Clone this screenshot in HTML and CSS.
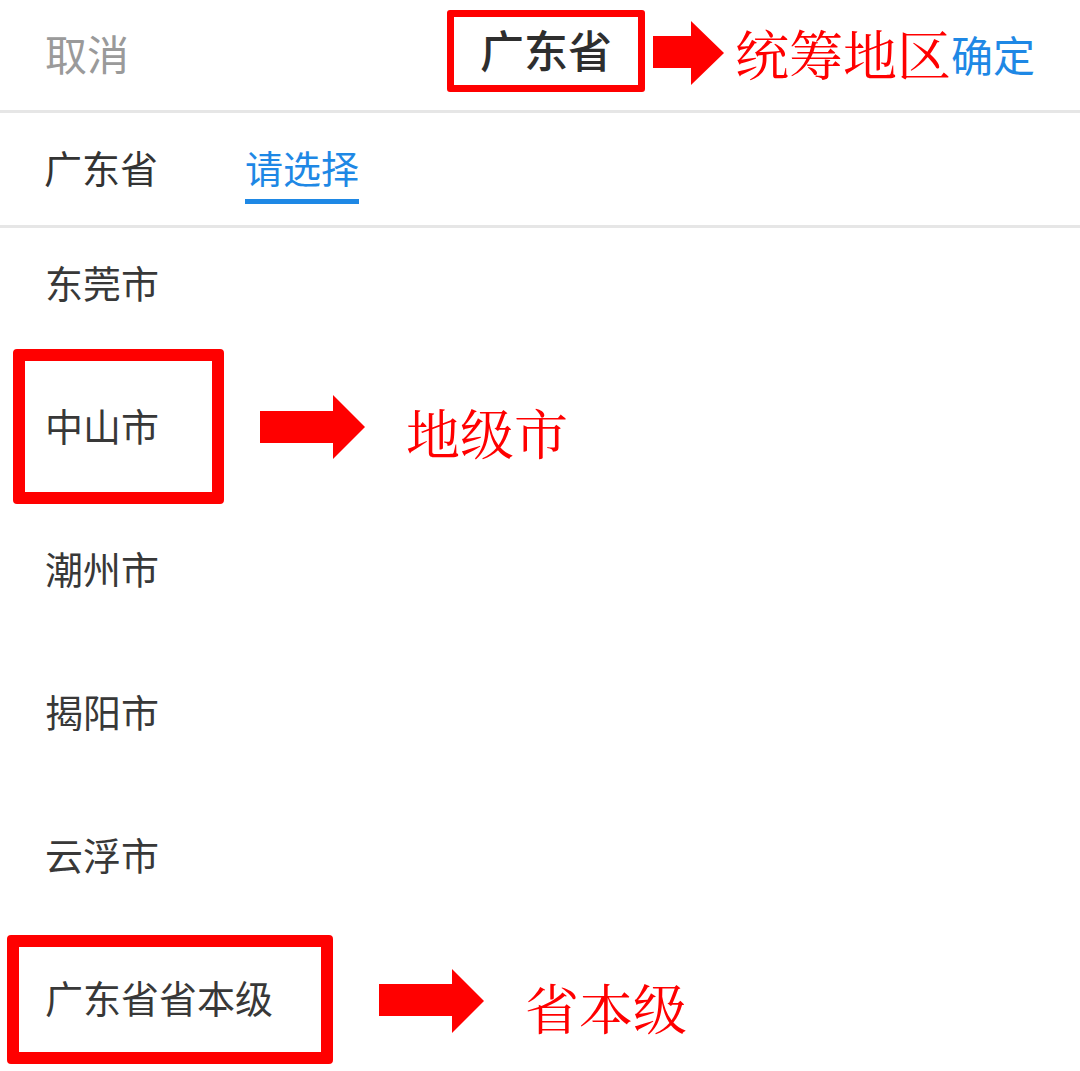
FILE: index.html
```html
<!DOCTYPE html>
<html lang="zh-CN">
<head>
    <meta charset="UTF-8">
    <meta name="viewport" content="width=device-width, initial-scale=1.0">
    <title>选择统筹地区</title>
    <link rel="stylesheet" href="styles.css">
</head>
<body>
    <div class="page">
        <!-- Header: cancel / title / confirm -->
        <div class="header">
            <div class="cancel">取消</div>
            <div class="title">广东省</div>
            <div class="header-right">
                <svg class="arrow arrow-top" width="71" height="64" viewBox="0 0 71 64">
                    <polygon points="0,15 38,15 38,0 71,32 38,64 38,47 0,47" fill="#ff0000"/>
                </svg>
                <span class="note note-top">统筹地区</span>
                <span class="confirm">确定</span>
            </div>
        </div>

        <div class="tabs">
            <div class="tab">广东省</div>
            <div class="tab active">请选择</div>
        </div>

        <ul class="list">
            <li class="item"><span class="name">东莞市</span></li>
            <li class="item">
                <span class="name">中山市<span class="mark mark-city"></span></span>
                <svg class="arrow arrow-city" width="105" height="64" viewBox="0 0 105 64">
                    <polygon points="0,16 73,16 73,0 105,32 73,64 73,48 0,48" fill="#ff0000"/>
                </svg>
                <span class="note note-city">地级市</span>
            </li>
            <li class="item"><span class="name">潮州市</span></li>
            <li class="item"><span class="name">揭阳市</span></li>
            <li class="item"><span class="name">云浮市</span></li>
            <li class="item">
                <span class="name">广东省省本级<span class="mark mark-prov"></span></span>
                <svg class="arrow arrow-prov" width="105" height="64" viewBox="0 0 105 64">
                    <polygon points="0,15 73,15 73,0 105,32 73,64 73,47 0,47" fill="#ff0000"/>
                </svg>
                <span class="note note-prov">省本级</span>
            </li>
        </ul>
    </div>
</body>
</html>
```

FILE: styles.css
```css
html, body {
    margin: 0;
    padding: 0;
    background: #ffffff;
    overflow: hidden;
}

body {
    font-family: "Noto Sans CJK SC", "Noto Sans", sans-serif;
    color: #333333;
}

.page {
    width: 1080px;
    height: 1071px;
    overflow: hidden;
}

/* Header */
.header {
    display: grid;
    grid-template-columns: 1fr auto 1fr;
    align-items: center;
    height: 110px;
    border-bottom: 3px solid #e6e6e6;
}

.cancel {
    padding-left: 45px;
    margin-top: -6px;
    font-size: 42px;
    color: #9a9a9a;
}

.title {
    margin-left: 12px;
    padding: 0 26px;
    height: 68px;
    line-height: 64px;
    font-size: 44px;
    font-weight: 500;
    color: #2e2e2e;
    border: 7px solid #ff0000;
    border-radius: 3px;
    margin-top: -8px;
}

.header-right {
    display: flex;
    align-items: center;
    justify-content: flex-end;
    padding-right: 45px;
    margin-top: -4px;
}

.arrow {
    display: block;
    flex: none;
}

.note {
    color: #ff0000;
    font-family: "Noto Serif CJK SC", "Noto Sans CJK SC", serif;
    font-size: 54px;
    line-height: 1;
}

.note-top {
    margin-left: 11px;
}

.confirm {
    font-size: 42px;
    color: #1e88e5;
}

/* Tabs */
.tabs {
    display: flex;
    align-items: flex-start;
    gap: 87px;
    height: 112px;
    padding-left: 44px;
    border-bottom: 3px solid #e6e6e6;
}

.tab {
    padding: 34px 0 12px;
    line-height: 40px;
    font-size: 38px;
    color: #333333;
    border-bottom: 5px solid transparent;
}

.tab.active {
    color: #1e88e5;
    border-bottom-color: #1e88e5;
}

/* List */
.list {
    list-style: none;
    margin: 0;
    padding: 0;
}

.item {
    display: flex;
    align-items: center;
    box-sizing: border-box;
    height: 114px;
    padding-bottom: 7px;
    margin-bottom: 29px;
    padding-left: 45px;
    font-size: 38px;
    color: #383838;
}

.name {
    position: relative;
}

/* red annotation frames */
.mark {
    position: absolute;
    border: 12px solid #ff0000;
    border-radius: 4px;
}

.mark-city {
    left: -32px;
    right: -65px;
    top: -48px;
    bottom: -52px;
}

.mark-prov {
    left: -38px;
    right: -60px;
    top: -34px;
    bottom: -40px;
}

.arrow-city {
    margin-left: 101px;
    margin-top: 4px;
}

.note-city {
    margin-left: 41px;
    margin-top: 14px;
}

.arrow-prov {
    margin-left: 106px;
    margin-top: 8px;
}

.note-prov {
    margin-left: 41px;
    margin-top: 20px;
}
```
